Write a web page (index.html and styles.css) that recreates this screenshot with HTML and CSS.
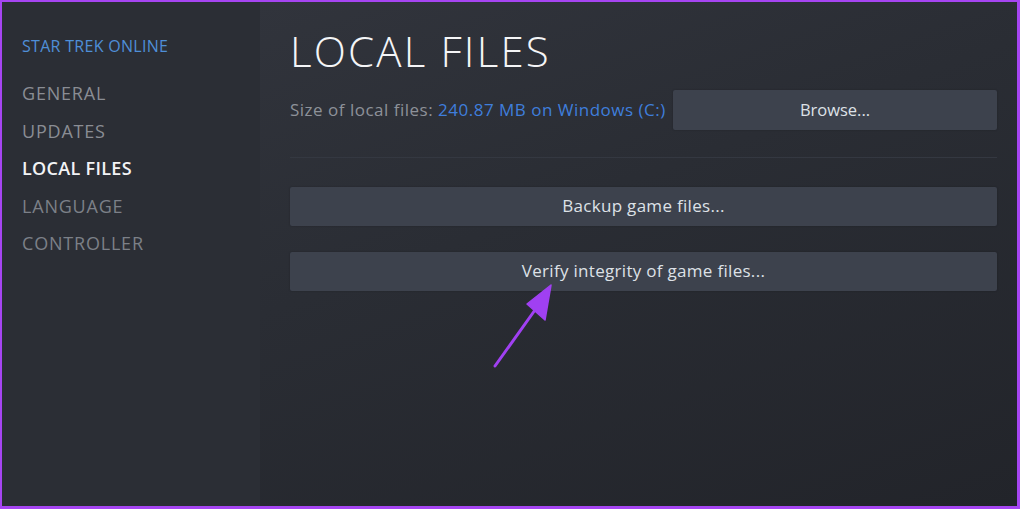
FILE: index.html
```html
<!DOCTYPE html>
<html lang="en">
<head>
<meta charset="utf-8">
<title>Local Files</title>
<link rel="stylesheet" href="styles.css">
</head>
<body>
<div class="frame">
  <nav class="sidebar">
    <div class="game-title">STAR TREK ONLINE</div>
    <ul class="menu">
      <li class="item">GENERAL</li>
      <li class="item">UPDATES</li>
      <li class="item active">LOCAL FILES</li>
      <li class="item dim">LANGUAGE</li>
      <li class="item dim">CONTROLLER</li>
    </ul>
  </nav>
  <main class="content">
    <h1 class="title">LOCAL FILES</h1>
    <div class="size-row">
      <span class="size-label">Size of local files: <span class="size-value">240.87 MB on Windows (C:)</span></span>
      <button class="btn browse">Browse...</button>
    </div>
    <div class="separator"></div>
    <button class="btn wide">Backup game files...</button>
    <button class="btn wide verify">Verify integrity of game files...</button>
    <svg class="arrow" width="80" height="100" viewBox="0 0 80 100">
      <line x1="10" y1="89" x2="50" y2="33" stroke="#a040f2" stroke-width="3" stroke-linecap="round"/>
      <polygon points="66,8 42,27 60,43" fill="#a040f2" stroke="#a040f2" stroke-width="1.5" stroke-linejoin="round"/>
    </svg>
  </main>
</div>
</body>
</html>
```

FILE: styles.css
```css
* { box-sizing: border-box; }
html, body { margin: 0; padding: 0; background: #a645f2; }
body { width: 1020px; height: 509px; overflow: hidden; font-family: "Open Sans", "Noto Sans", sans-serif; }
.frame {
  display: flex;
  width: 1020px;
  height: 509px;
  border-top: 2px solid #a645f2;
  border-left: 2px solid #a645f2;
  border-right: 3px solid #a645f2;
  border-bottom: 3px solid #a645f2;
}
.sidebar {
  width: 258px;
  flex: none;
  background: #2b2e35;
  padding: 34px 0 0 20px;
}
.game-title {
  color: #4f8fd8;
  font-size: 16px;
  letter-spacing: 0.3px;
  line-height: 20px;
}
.menu { list-style: none; margin: 27px 0 0; padding: 0; }
.item {
  color: #8a8d94;
  font-size: 18px;
  line-height: 20px;
  height: 37.5px;
  letter-spacing: 0.8px;
}
.item.active { color: #f2f3f5; font-weight: 600; letter-spacing: 0.3px; }
.item.dim { color: #7c8088; }
.content {
  flex: 1;
  position: relative;
  padding: 22px 20px 0 30px;
  background: linear-gradient(160deg, #31343c 0%, #2a2d34 40%, #22242a 100%);
}
.title {
  margin: 0;
  color: #f4f5f7;
  font-family: "Open Sans", sans-serif;
  font-weight: 300;
  font-size: 42px;
  line-height: 54px;
  letter-spacing: 2.2px;
}
.size-row {
  display: flex;
  align-items: center;
  justify-content: space-between;
  margin-top: 12px;
  height: 40px;
}
.size-label { color: #8d9199; font-size: 17px; letter-spacing: 0.5px; line-height: 20px; }
.size-value { color: #3f7edc; }
.btn {
  display: block;
  background: #3d424d;
  border: none;
  border-radius: 2px;
  color: #dde1e7;
  font-family: "Open Sans", sans-serif;
  font-size: 17px;
  letter-spacing: 0.3px;
  height: 40px;
  padding: 0 0 2px;
  box-shadow: 0 0 2px rgba(0,0,0,0.25);
}
.browse { width: 324px; letter-spacing: 0; font-size: 16.5px; }
.separator {
  height: 1px;
  background: #343841;
  margin-top: 27px;
}
.wide { width: 707px; margin-top: 29px; height: 39px; }
.verify { margin-top: 26px; }
.arrow { position: absolute; left: 225px; top: 275px; }
```
